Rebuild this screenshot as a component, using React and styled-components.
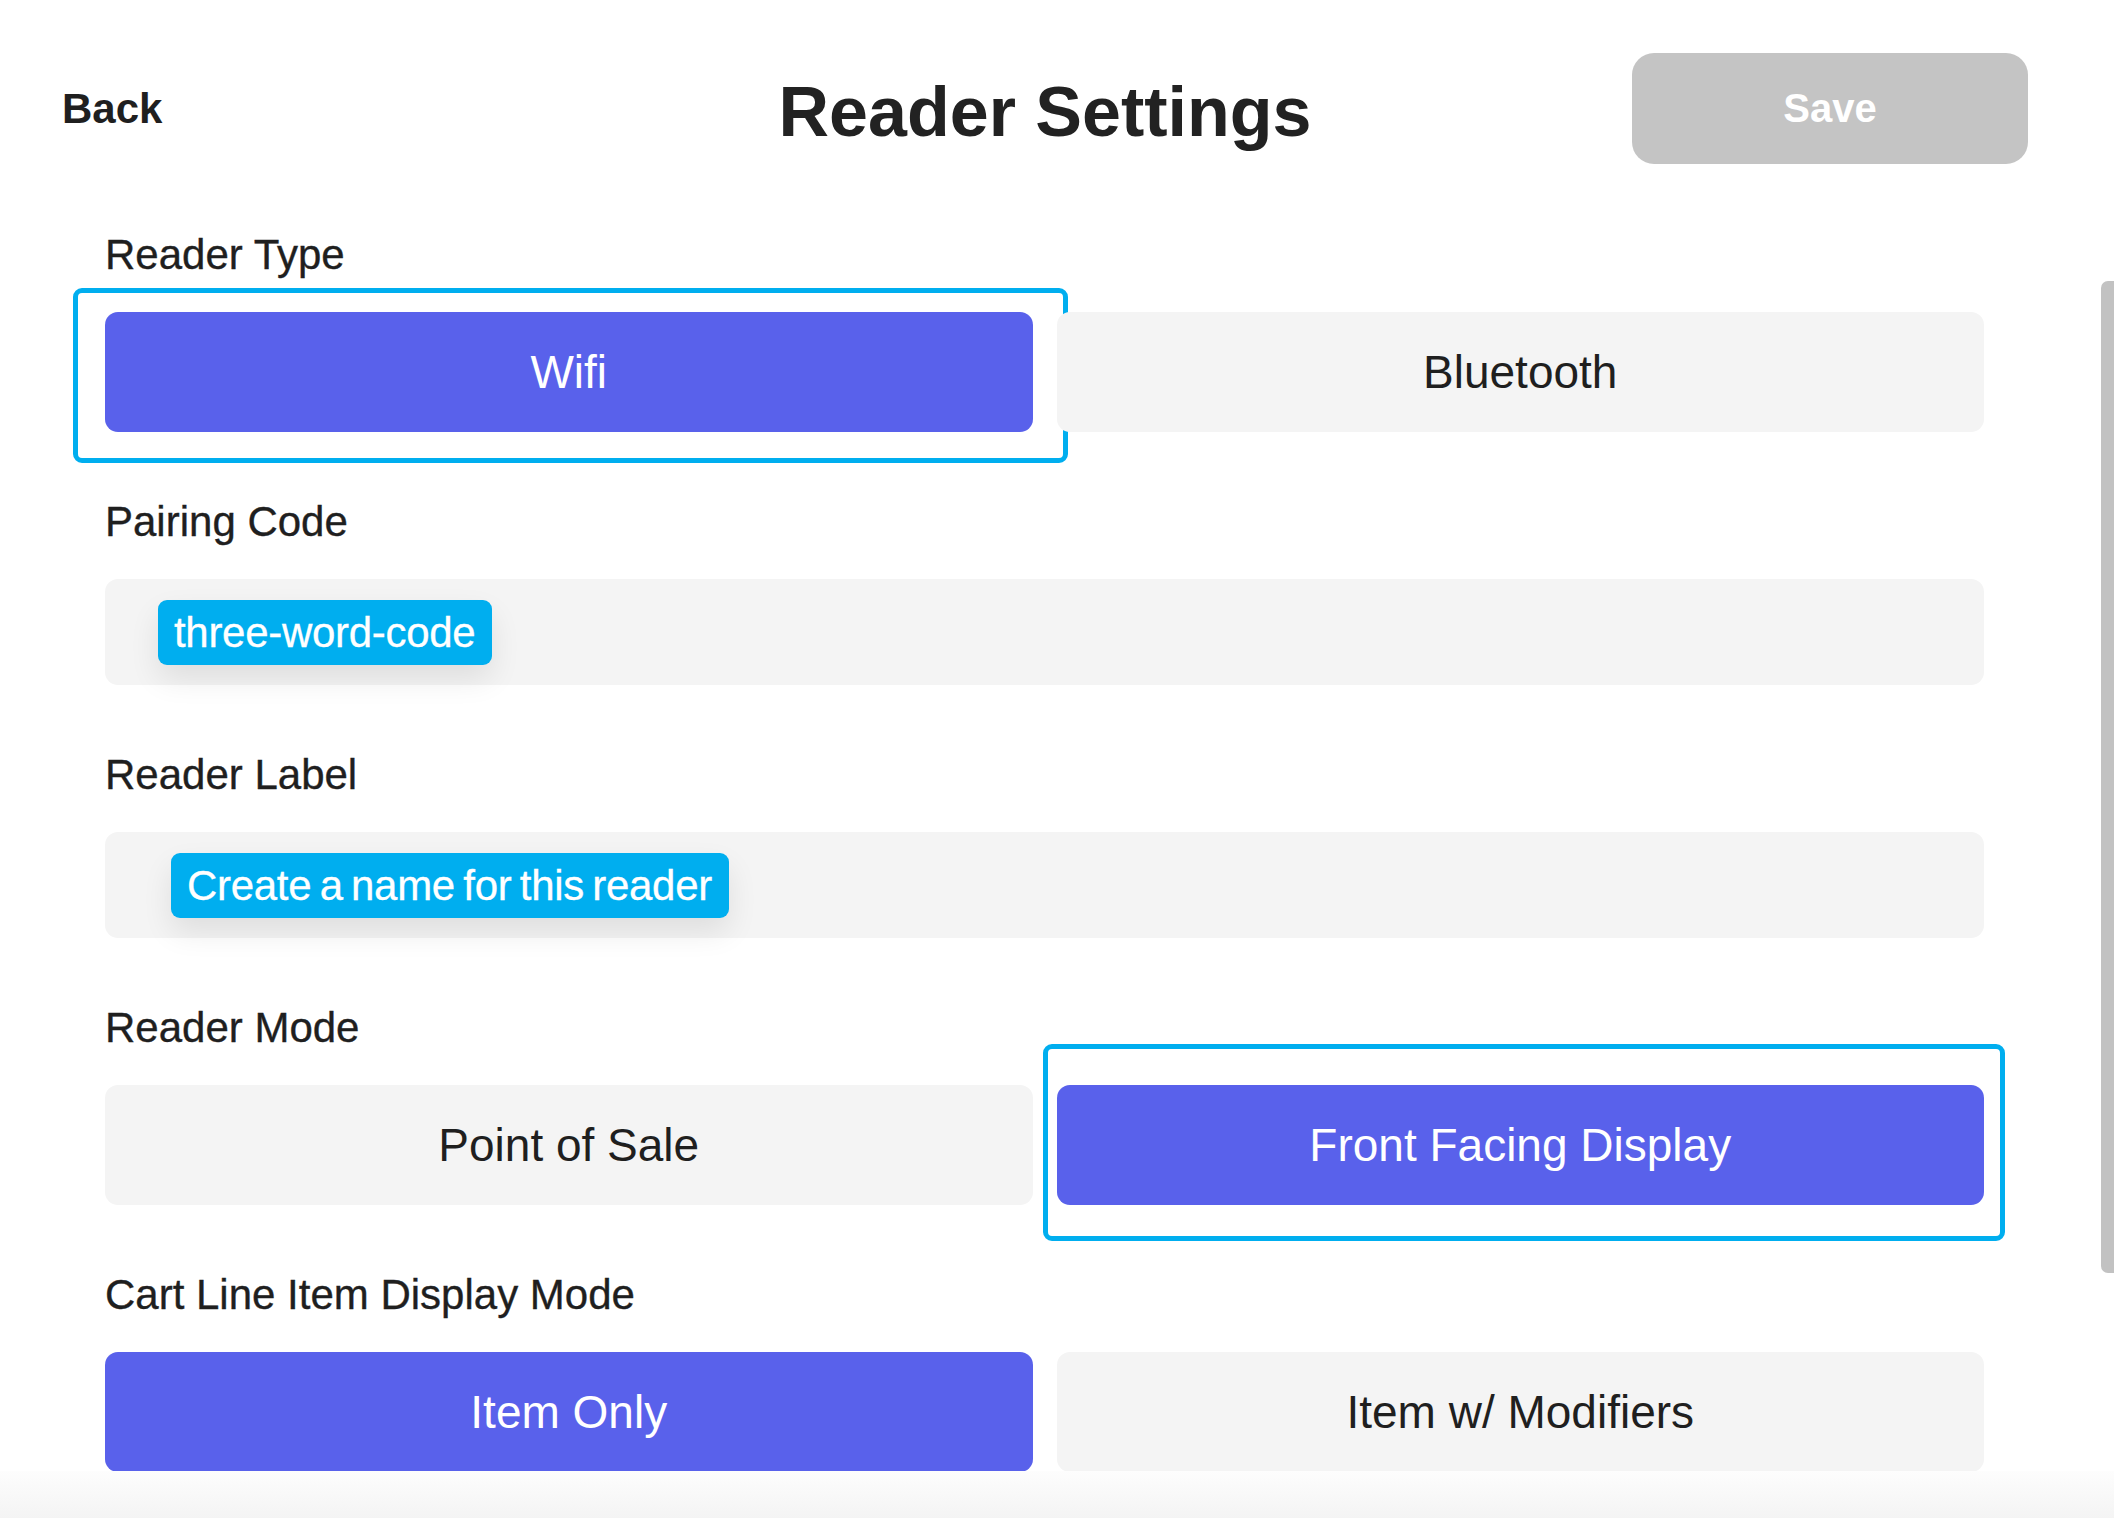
import React from 'react';
import styled, { createGlobalStyle } from 'styled-components';

const GlobalStyle = createGlobalStyle`
  html, body {
    margin: 0;
    padding: 0;
    background: #ffffff;
  }
  body {
    font-family: "Liberation Sans", Arial, Helvetica, sans-serif;
    color: #1f1f1f;
  }
  * { box-sizing: border-box; }
`;

const Page = styled.div`
  position: relative;
  width: 2114px;
  height: 1518px;
  overflow: hidden;
  background: #ffffff;
`;

const Header = styled.header`
  display: grid;
  grid-template-columns: 1fr auto 1fr;
  align-items: center;
  height: 164px;
  padding: 53px 86px 0 62px;
`;

const BackButton = styled.button`
  justify-self: start;
  background: none;
  border: none;
  padding: 0;
  font-family: inherit;
  font-size: 42px;
  font-weight: 700;
  color: #1f1f1f;
  line-height: 1;
  cursor: pointer;
`;

const Title = styled.h1`
  margin: 6px 0 0;
  font-size: 70px;
  font-weight: 700;
  line-height: 1;
  color: #222222;
`;

const SaveButton = styled.button`
  justify-self: end;
  width: 396px;
  height: 111px;
  border: none;
  border-radius: 22px;
  background: #c4c4c4;
  color: #ffffff;
  font-family: inherit;
  font-size: 40px;
  font-weight: 700;
  cursor: default;
`;

const Content = styled.main`
  display: flex;
  flex-direction: column;
  gap: 66px;
  padding: 67px 130px 0 105px;
`;

const Section = styled.section`
  display: flex;
  flex-direction: column;
  gap: 33px;
`;

const Label = styled.div`
  font-size: 42px;
  line-height: 48px;
  color: #1f1f1f;
  -webkit-text-stroke: 0.35px currentColor;
`;

const Segmented = styled.div`
  display: grid;
  grid-template-columns: 1fr 1fr;
  gap: 24px;
`;

const Option = styled.button`
  position: relative;
  height: 120px;
  border: none;
  border-radius: 13px;
  background: ${p => (p.$active ? '#5961eb' : '#f4f4f4')};
  color: ${p => (p.$active ? '#ffffff' : '#1f1f1f')};
  font-family: inherit;
  font-size: 46px;
  cursor: pointer;
`;

const FocusRing = styled.span`
  position: absolute;
  top: ${p => p.$t}px;
  left: ${p => p.$l}px;
  right: ${p => p.$r}px;
  bottom: ${p => p.$b}px;
  border: 5px solid #00aeef;
  border-radius: 9px;
  pointer-events: none;
`;

const InputBox = styled.div`
  display: flex;
  align-items: center;
  height: 106px;
  padding-left: ${p => p.$inset}px;
  border-radius: 13px;
  background: #f4f4f4;
`;

const Pill = styled.span`
  display: inline-block;
  height: 65px;
  line-height: 65px;
  padding: 0 17px 0 16px;
  border-radius: 9px;
  background: #00aeef;
  color: #ffffff;
  font-size: 42px;
  letter-spacing: -0.3px;
  word-spacing: -3px;
  white-space: nowrap;
  -webkit-text-stroke: 0.3px currentColor;
  box-shadow: 0 14px 30px rgba(0, 0, 0, 0.09);
`;

const BottomFade = styled.div`
  position: absolute;
  left: 0;
  right: 0;
  bottom: 0;
  height: 47px;
  background: linear-gradient(to bottom, #fdfdfd, #f4f4f4);
`;

const ScrollThumb = styled.div`
  position: absolute;
  top: 281px;
  right: 0;
  width: 13px;
  height: 992px;
  border-radius: 7px 0 0 7px;
  background: #c2c2c2;
`;

function SegmentedControl({ options, active, ring }) {
  return (
    <Segmented>
      {options.map((o, i) => (
        <Option key={o} $active={i === active}>
          {o}
          {ring && ring.index === i && (
            <FocusRing $t={ring.t} $l={ring.l} $r={ring.r} $b={ring.b} />
          )}
        </Option>
      ))}
    </Segmented>
  );
}

export default function App() {
  return (
    <Page>
      <GlobalStyle />
      <Header>
        <BackButton>Back</BackButton>
        <Title>Reader Settings</Title>
        <SaveButton>Save</SaveButton>
      </Header>
      <Content>
        <Section>
          <Label>Reader Type</Label>
          <SegmentedControl
            options={['Wifi', 'Bluetooth']}
            active={0}
            ring={{ index: 0, t: -24, l: -32, r: -35, b: -31 }}
          />
        </Section>
        <Section>
          <Label>Pairing Code</Label>
          <InputBox $inset={53}>
            <Pill>three-word-code</Pill>
          </InputBox>
        </Section>
        <Section>
          <Label>Reader Label</Label>
          <InputBox $inset={66}>
            <Pill>Create a name for this reader</Pill>
          </InputBox>
        </Section>
        <Section>
          <Label>Reader Mode</Label>
          <SegmentedControl
            options={['Point of Sale', 'Front Facing Display']}
            active={1}
            ring={{ index: 1, t: -41, l: -14, r: -21, b: -36 }}
          />
        </Section>
        <Section>
          <Label>Cart Line Item Display Mode</Label>
          <SegmentedControl options={['Item Only', 'Item w/ Modifiers']} active={0} />
        </Section>
      </Content>
      <BottomFade />
      <ScrollThumb />
    </Page>
  );
}
